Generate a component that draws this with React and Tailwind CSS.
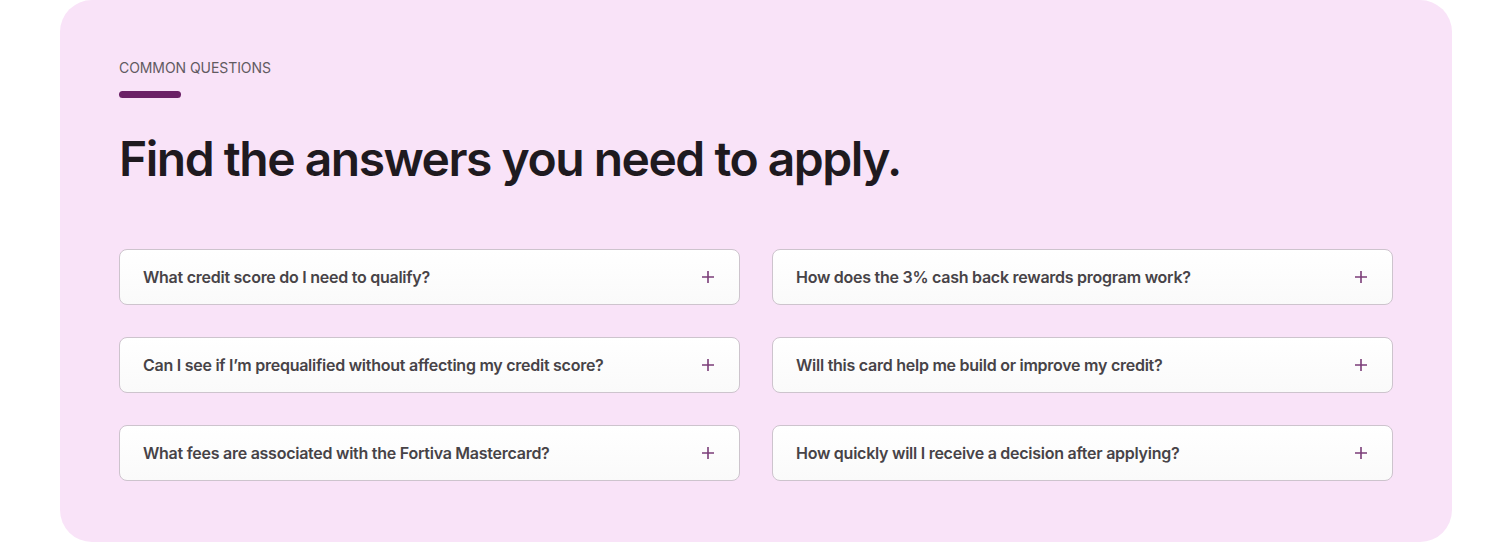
import React from "react";

const questions = [
  "What credit score do I need to qualify?",
  "How does the 3% cash back rewards program work?",
  "Can I see if I’m prequalified without affecting my credit score?",
  "Will this card help me build or improve my credit?",
  "What fees are associated with the Fortiva Mastercard?",
  "How quickly will I receive a decision after applying?",
];

const PlusIcon = () => (
  <svg width="12" height="12" viewBox="0 0 12 12" fill="none" className="shrink-0">
    <path d="M6 0v12M0 6h12" stroke="#7b3d78" strokeWidth="1.6" />
  </svg>
);

const FaqItem = ({ text }) => (
  <button
    type="button"
    className="flex h-[56px] w-full items-center justify-between rounded-[8px] border border-[#cdc4cd] bg-gradient-to-b from-white to-[#fafafa] pl-[23px] pr-[25px] text-left"
  >
    <span className="text-[16px] font-semibold tracking-[-0.016em] text-[#474347]">{text}</span>
    <PlusIcon />
  </button>
);

export default function App() {
  return (
    <div className="bg-white px-[60px]" style={{ fontFamily: "Inter, 'Noto Sans', sans-serif" }}>
      <section className="h-[542px] rounded-[32px] bg-[#f9e3f8] px-[59px] pt-[60px]">
        <p className="text-[14px] leading-[16px] tracking-[-0.005em] text-[#615a61]">COMMON QUESTIONS</p>
        <div className="mt-[15px] h-[7px] w-[62px] rounded-full bg-[#6b2166]" />
        <h2 className="mt-[33px] text-[48px] font-semibold leading-[56px] tracking-[-0.031em] text-[#1f1a1f]">
          Find the answers you need to apply.
        </h2>
        <div className="mt-[62px] grid grid-cols-2 gap-x-[32px] gap-y-[32px]">
          {questions.map((q) => (
            <FaqItem key={q} text={q} />
          ))}
        </div>
      </section>
    </div>
  );
}
